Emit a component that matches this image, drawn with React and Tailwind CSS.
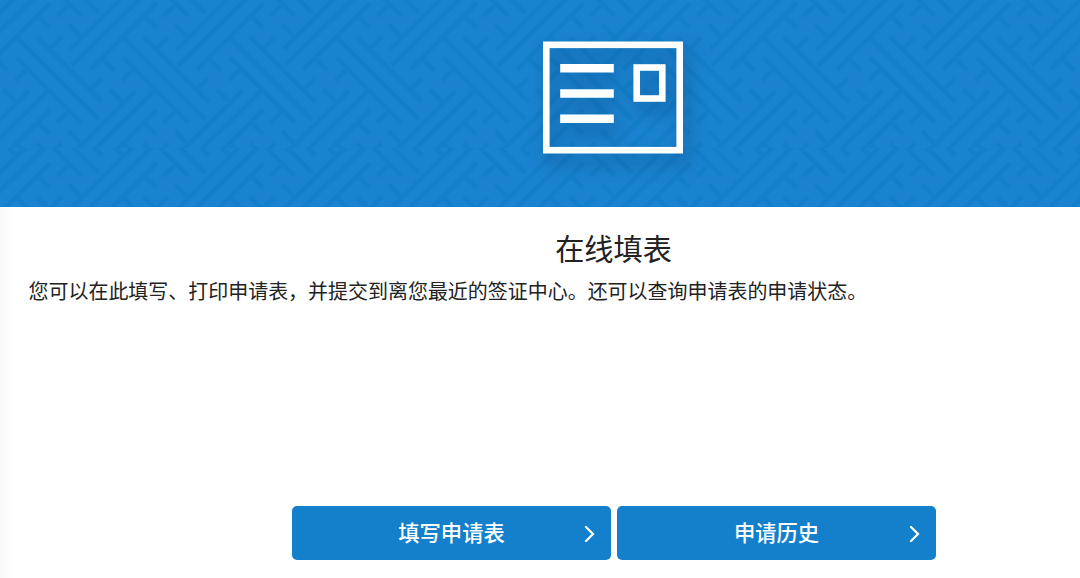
// one cell of the lattice, 320 x 320 units
const LATTICE = [
  "M211 148L407 -48",
  "M214 198L468 -52",
  "M270 209L470 10",
  "M370 173L565 368",
  "M370 112L616 358",
  "M430 110L627 307",
  "M170 49L205 14",
  "M150 145L185 110",
  "M46 242L83 205",
  "M270 270L305 235",
  "M305 175L344 213",
  "M430 45L469 83",
  "M206 73L242 109",
  "M330 268L365 303",
].join("");

const SHIFTS = [-640, -320, 0, 320];

const ACTIONS = [
  { id: "fill", label: "填写申请表" },
  { id: "history", label: "申请历史" },
];

function LatticePattern({ id, y }) {
  return (
    <pattern
      id={id}
      width="320"
      height="320"
      patternUnits="userSpaceOnUse"
      patternTransform={`translate(0 ${y}) scale(0.33333)`}
    >
      {SHIFTS.map((dx) =>
        SHIFTS.map((dy) => (
          <path
            key={`${dx},${dy}`}
            d={LATTICE}
            transform={`translate(${dx} ${dy})`}
            stroke="#137fca"
            strokeWidth="15"
            fill="none"
          />
        ))
      )}
    </pattern>
  );
}

function FormIcon() {
  return (
    <svg
      className="relative h-[112px] w-[140px] overflow-visible drop-shadow-[5px_10px_9px_rgba(10,50,100,0.46)]"
      viewBox="0 -0.5 140 112"
      fill="none"
      stroke="#fff"
    >
      <rect x="3.3" y="3.3" width="133.4" height="105.4" strokeWidth="6.6" />
      <path d="M17.2 26.7h53.6M17.2 52h53.6M17.2 77.3h53.6" strokeWidth="8.4" />
      <rect x="93.7" y="26" width="25.6" height="31" strokeWidth="6.6" />
    </svg>
  );
}

function Banner() {
  return (
    <header className="relative flex h-[207px] justify-center bg-[#1a83d0] pt-[41px] pr-px">
      <svg className="absolute inset-0 h-full w-full">
        <defs>
          <LatticePattern id="lattice-top" y={0} />
          <LatticePattern id="lattice-bottom" y={53.33} />
        </defs>
        <rect width="100%" height="148" fill="url(#lattice-top)" />
        <rect y="148" width="100%" height="59" fill="url(#lattice-bottom)" />
      </svg>
      <FormIcon />
    </header>
  );
}

function ActionButton({ label }) {
  return (
    <button className="flex h-[54px] w-[319px] items-center justify-center rounded-[5px] bg-[#1480cc] pr-[15px] pl-4 text-[21.3px] font-medium text-white">
      <span className="w-3" />
      <span className="flex-1 pb-0.5 text-center">{label}</span>
      <svg className="mt-0.5 h-4 w-3" viewBox="0 0 12 16" fill="none" stroke="#fff" strokeWidth="2.2">
        <path d="M2 1l7 7-7 7" strokeLinecap="round" />
      </svg>
    </button>
  );
}

export default function App() {
  return (
    <div className="h-[578px] w-full overflow-hidden bg-white font-['Noto_Sans_CJK_SC',sans-serif] text-[#222]">
      <div className="flex h-full w-[1227px] flex-col">
        <Banner />
        <main className="flex flex-1 flex-col bg-linear-to-r from-[#f9f9f9] to-white to-[14px] px-[28.5px] pb-[18px]">
          <h1 className="mt-[19px] text-center text-[29.2px] leading-[42px]">在线填表</h1>
          <p className="mt-0.5 text-[19.98px] leading-[42px] whitespace-nowrap">
            您可以在此填写、打印申请表，并提交到离您最近的签证中心。还可以查询申请表的申请状态。
          </p>
          <div className="mt-auto flex justify-center gap-1.5">
            {ACTIONS.map((a) => (
              <ActionButton key={a.id} label={a.label} />
            ))}
          </div>
        </main>
      </div>
    </div>
  );
}
